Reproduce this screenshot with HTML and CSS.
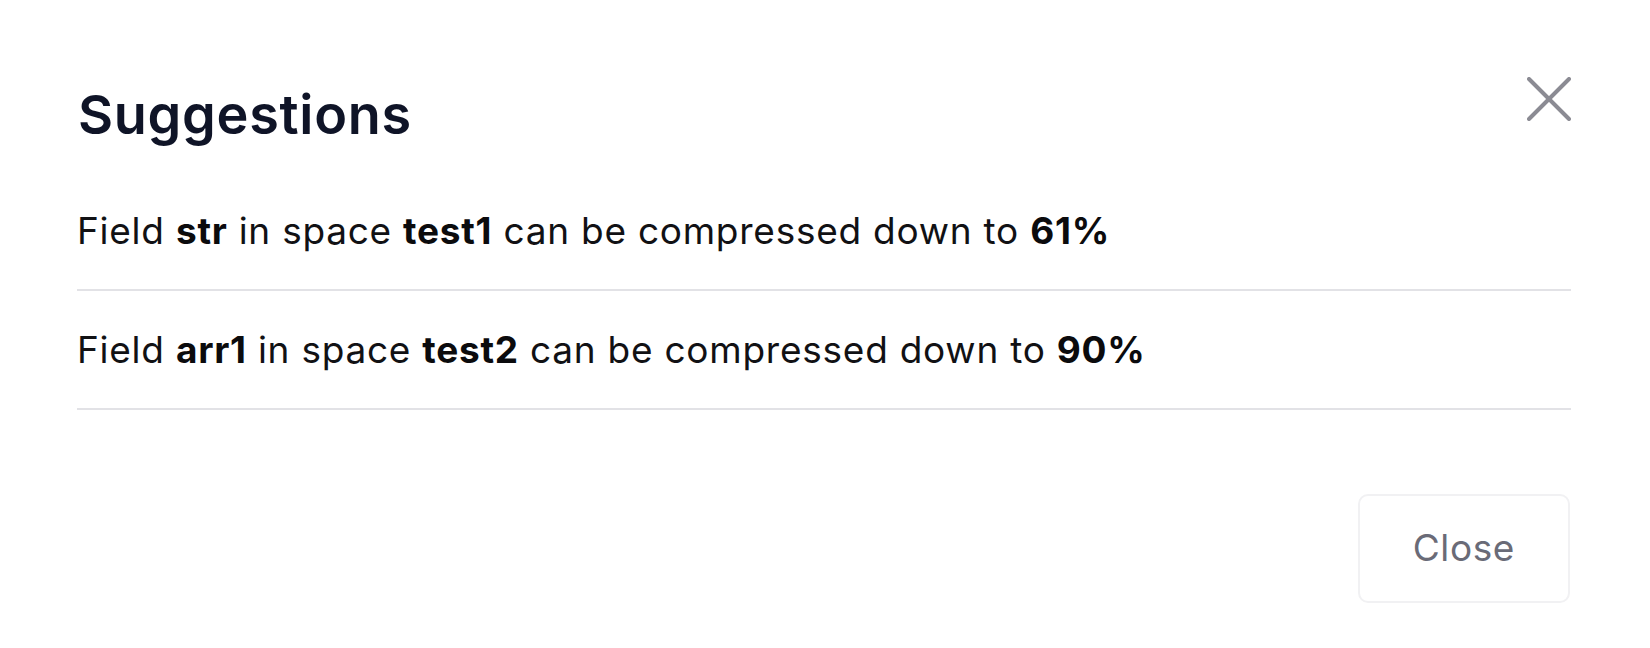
FILE: index.html
```html
<!DOCTYPE html>
<html lang="en">
<head>
<meta charset="utf-8">
<title>Suggestions</title>
<link rel="stylesheet" href="styles.css">
</head>
<body>
<div class="modal">
  <div class="modal-header">
    <h2 class="modal-title">Suggestions</h2>
    <button class="icon-close" aria-label="Close">
      <svg width="44" height="44" viewBox="0 0 44 44" fill="none" stroke="#8b8b93" stroke-width="4" stroke-linecap="round">
        <path d="M2 2 L42 42"/>
        <path d="M42 2 L2 42"/>
      </svg>
    </button>
  </div>
  <ul class="list">
    <li class="row">Field <b>str</b> in space <b>test1</b> can be compressed down to <b>61%</b></li>
    <li class="row">Field <b>arr1</b> in space <b>test2</b> can be compressed down to <b>90%</b></li>
  </ul>
  <div class="modal-footer">
    <button class="btn">Close</button>
  </div>
</div>
</body>
</html>
```
FILE: styles.css
```css
html, body {
  margin: 0;
  padding: 0;
  background: #ffffff;
}
body {
  font-family: Inter, "Noto Sans", sans-serif;
  color: #111114;
}
.modal {
  padding: 77px 79px 0 77px;
}
.modal-header {
  display: flex;
  justify-content: space-between;
  align-items: flex-start;
}
.modal-title {
  margin: 11px 0 0 1px;
  font-size: 54px;
  line-height: 54px;
  font-weight: 600;
  letter-spacing: 0.7px;
  color: #0f1427;
}
.icon-close {
  display: block;
  width: 44px;
  height: 44px;
  padding: 0;
  margin: 0;
  border: 0;
  background: none;
}
.icon-close svg {
  display: block;
}
.list {
  list-style: none;
  margin: 30px 0 0;
  padding: 0;
}
.row {
  font-size: 37px;
  line-height: 55px;
  letter-spacing: 0.75px;
  padding: 31px 0;
  border-bottom: 2px solid #e2e2e6;
}
.row b {
  font-weight: 700;
  color: #0b0b0d;
}
.modal-footer {
  display: flex;
  justify-content: flex-end;
  margin-top: 84px;
}
.btn {
  font-family: Inter, "Noto Sans", sans-serif;
  font-size: 37px;
  line-height: 54px;
  letter-spacing: 0.6px;
  color: #6a6b77;
  background: #ffffff;
  border: 2px solid #f1f1f3;
  border-radius: 10px;
  padding: 25px 53px 26px;
  margin-right: 1px;
}
```
